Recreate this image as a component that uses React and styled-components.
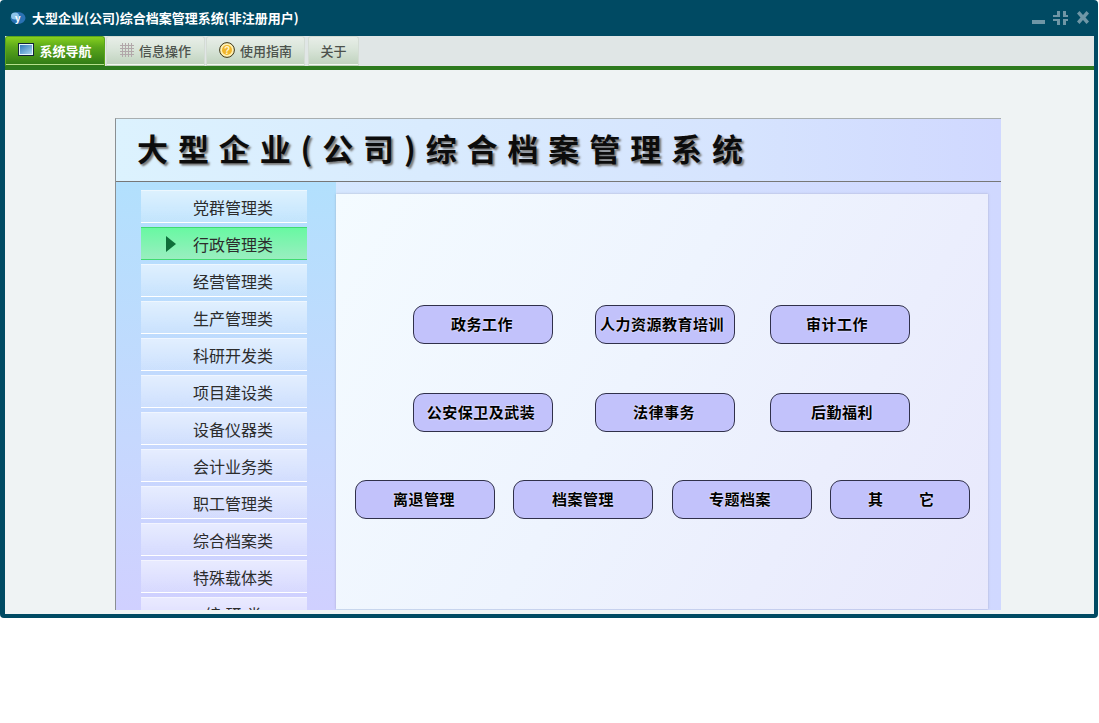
import styled, { createGlobalStyle } from "styled-components";

const GlobalStyle = createGlobalStyle`
  html, body {
    margin: 0;
    padding: 0;
    background: #fff;
    font-family: "Noto Sans CJK SC", "Liberation Sans", sans-serif;
  }
`;

const NAV_ITEMS = [
  "党群管理类",
  "行政管理类",
  "经营管理类",
  "生产管理类",
  "科研开发类",
  "项目建设类",
  "设备仪器类",
  "会计业务类",
  "职工管理类",
  "综合档案类",
  "特殊载体类",
  "编 研 类",
];

// label, gap before the button, nudge of the label to the left
const BUTTON_ROWS = [
  { top: 111, left: 77, items: [["政务工作", 0, 2], ["人力资源教育培训", 42, 6], ["审计工作", 35, 6]] },
  { top: 49, left: 77, items: [["公安保卫及武装", 0, 4], ["法律事务", 42, 2], ["后勤福利", 35, -4]] },
  { top: 48, left: 19, items: [["离退管理", 0, 2], ["档案管理", 18, 0], ["专题档案", 19, 4], ["其　　它", 18, -4, true]] },
];

const AppIcon = () => (
  <svg width="16" height="14" viewBox="0 0 16 14">
    <ellipse cx="8" cy="7" rx="7.5" ry="6" fill="#2a72b4" />
    <ellipse cx="5" cy="5" rx="4" ry="3.5" fill="#8cc4ea" />
    <text x="5" y="11" fontSize="10" fontWeight="700" fill="#fff" fontFamily="Liberation Sans">y</text>
  </svg>
);

const WindowControls = () => (
  <svg width="57" height="14" viewBox="0 0 57 14">
    <g fill="#6f96a6">
      <rect x="0" y="9" width="13" height="4" />
      <path d="M25 0h3v6h-7V4h4zM31 0h3v4h2v2h-5zM21 8h7v6h-3v-4h-4zM31 8h5v2h-2v4h-3z" />
      <path d="M45 2.500l2.500-2.500 3.500 4 3.500-4 2.500 2.500-3.500 4 3.500 4-2.500 2.500-3.500-4-3.500 4-2.500-2.500 3.500-4z" />
    </g>
  </svg>
);

const MonitorIcon = () => (
  <svg width="16" height="14" viewBox="0 0 16 14">
    <defs>
      <linearGradient id="screenFill" x1="0" y1="0" x2="1" y2="1">
        <stop offset="0" stopColor="#2f78b8" />
        <stop offset="1" stopColor="#a8d6f0" />
      </linearGradient>
    </defs>
    <rect x="0.500" y="0.500" width="15" height="12" fill="#e8f4fb" stroke="#10243a" />
    <rect x="2" y="2" width="12" height="9" fill="url(#screenFill)" />
  </svg>
);

const GridIcon = () => (
  <svg width="14" height="14" viewBox="0 0 14 14" stroke="#b2a8aa" strokeWidth="1">
    <path d="M2.500 0v14M5.500 0v14M8.500 0v14M11.500 0v14M0 2.500h14M0 5.500h14M0 8.500h14M0 11.500h14" />
  </svg>
);

const GuideIcon = () => (
  <svg width="16" height="16" viewBox="0 0 16 16">
    <circle cx="8" cy="8" r="7.400" fill="#fff0b0" stroke="#3c3418" />
    <circle cx="8" cy="8" r="5" fill="#f0b52c" />
    <text x="8" y="11.500" fontSize="10" fontWeight="700" textAnchor="middle" fill="#fff6d0" fontFamily="Liberation Sans">?</text>
  </svg>
);

const ArrowIcon = () => (
  <svg width="10" height="16" viewBox="0 0 10 16">
    <path d="M0 0l10 8-10 8z" fill="#0f6e3a" />
  </svg>
);

const App = () => (
  <>
    <GlobalStyle />
    <Window>
      <TitleBar>
        <AppIcon />
        <TitleText>大型企业(公司)综合档案管理系统(非注册用户)</TitleText>
        <ControlSlot>
          <WindowControls />
        </ControlSlot>
      </TitleBar>
      <Inner>
        <TabBar>
          <Tab $active $width={100}>
            <MonitorIcon />
            <span>系统导航</span>
          </Tab>
          <Tab $width={99}>
            <GridIcon />
            <span>信息操作</span>
          </Tab>
          <Tab $width={99}>
            <GuideIcon />
            <span>使用指南</span>
          </Tab>
          <Tab $width={51} $gap={2}>
            <span>关于</span>
          </Tab>
        </TabBar>
        <Content>
          <Panel>
            <PanelHeader>
              <PanelTitle>大型企业(公司)综合档案管理系统</PanelTitle>
            </PanelHeader>
            <PanelBody>
              <SideColumn>
                {NAV_ITEMS.map((name, index) => (
                  <NavItem key={name} $active={index === 1}>
                    {index === 1 && (
                      <NavArrow>
                        <ArrowIcon />
                      </NavArrow>
                    )}
                    <NavLabel $spaced={name.includes(" ")}>{name}</NavLabel>
                  </NavItem>
                ))}
              </SideColumn>
              <MainColumn>
                <MainCard>
                  {BUTTON_ROWS.map((row) => (
                    <ButtonRow key={row.items[0][0]} $top={row.top} $left={row.left}>
                      {row.items.map(([label, gap, nudge, wide]) => (
                        <ActionButton key={label} $gap={gap} $nudge={nudge} $wide={wide}>
                          {label}
                        </ActionButton>
                      ))}
                    </ButtonRow>
                  ))}
                </MainCard>
              </MainColumn>
            </PanelBody>
          </Panel>
        </Content>
      </Inner>
    </Window>
  </>
);

export default App;

const Window = styled.div`
  width: 1098px;
  height: 618px;
  box-sizing: border-box;
  padding: 0 4px 4px 5px;
  background: #004a63;
  border-radius: 4px;
  display: flex;
  flex-direction: column;
`;

const TitleBar = styled.div`
  height: 36px;
  flex: none;
  display: flex;
  align-items: center;
  gap: 6px;
  padding: 0 5px 0 5px;
`;

const TitleText = styled.div`
  color: #fff;
  font-size: 13px;
  font-weight: 700;
  line-height: 36px;
`;

const ControlSlot = styled.div`
  margin-left: auto;
  display: flex;
  align-items: center;
`;

const Inner = styled.div`
  flex: 1;
  min-height: 0;
  background: #eff3f4;
  display: flex;
  flex-direction: column;
`;

const TabBar = styled.div`
  height: 30px;
  flex: none;
  background: #e0e6e6;
  border-bottom: 4px solid #2d7a1e;
  display: flex;
  gap: 1px;
`;

const Tab = styled.div`
  width: ${(props) => props.$width}px;
  margin-left: ${(props) => props.$gap || 0}px;
  box-sizing: border-box;
  padding-bottom: 2px;
  border-radius: 3px 3px 0 0;
  border: 1px solid ${(props) => (props.$active ? "#5aa51c" : "#d4dcd4")};
  border-bottom: 1px solid ${(props) => (props.$active ? "#2f7a16" : "#bfd2bd")};
  box-shadow: inset 0 -2px 0 -1px ${(props) => (props.$active ? "#b6e08e" : "#f2f6f0")};
  background: ${(props) =>
    props.$active
      ? "linear-gradient(#86d01e 0%, #5ca81a 35%, #2f7a16 100%)"
      : "linear-gradient(#e8eee8 0%, #d8e4d8 45%, #bfd2bd 100%)"};
  color: ${(props) => (props.$active ? "#fff" : "#4c524c")};
  font-size: 13px;
  font-weight: ${(props) => (props.$active ? 700 : 500)};
  display: flex;
  align-items: center;
  justify-content: center;
  gap: 5px;
`;

const Content = styled.div`
  flex: 1;
  min-height: 0;
  padding: 48px 0 4px 110px;
  display: flex;
`;

const Panel = styled.div`
  width: 886px;
  height: 492px;
  box-sizing: border-box;
  border-top: 1px solid #a8aeb0;
  border-left: 1px solid #8a8f92;
  overflow: hidden;
  display: flex;
  flex-direction: column;
`;

const PanelHeader = styled.div`
  height: 63px;
  flex: none;
  box-sizing: border-box;
  padding: 0 0 6px 21px;
  background: linear-gradient(90deg, #dcf2fe 0%, #d6e4fe 70%, #d0d8ff 100%);
  border-bottom: 1px solid #777;
  display: flex;
  align-items: center;
`;

const PanelTitle = styled.div`
  font-size: 31px;
  font-weight: 700;
  letter-spacing: 9.9px;
  color: #0c0c0c;
  text-shadow: 2px 2px 2px #777;
  white-space: nowrap;
`;

const PanelBody = styled.div`
  flex: 1;
  min-height: 0;
  display: flex;
  background: linear-gradient(90deg, #d8ecfe 0%, #d0d8ff 100%);
`;

const SideColumn = styled.div`
  width: 220px;
  flex: none;
  box-sizing: border-box;
  padding: 8px 29px 0 25px;
  background: linear-gradient(#b2e0fd 0%, #c6d8fe 60%, #d0d0ff 100%);
  display: flex;
  flex-direction: column;
  gap: 4px;
`;

const NavItem = styled.div`
  height: 33px;
  flex: none;
  position: relative;
  box-sizing: border-box;
  display: flex;
  align-items: center;
  padding-left: 52px;
  color: #2c2c2c;
  font-size: 16px;
  background: ${(props) =>
    props.$active
      ? "linear-gradient(#68f8a2 0%, #9aeec0 100%)"
      : "linear-gradient(rgba(255,255,255,0.55) 0%, rgba(255,255,255,0.18) 100%)"};
  border-top: 1px solid ${(props) => (props.$active ? "#3fdc70" : "rgba(255,255,255,0.7)")};
  border-bottom: 1px solid ${(props) => (props.$active ? "#3fdc70" : "#ffffff")};
`;

const NavArrow = styled.span`
  position: absolute;
  left: 25px;
  top: 8px;
  display: flex;
`;

const NavLabel = styled.span`
  margin-left: ${(props) => (props.$spaced ? "12px" : "0")};
  word-spacing: ${(props) => (props.$spaced ? "1px" : "0")};
  white-space: pre;
`;

const MainColumn = styled.div`
  flex: 1;
  min-width: 0;
  padding-top: 12px;
`;

const MainCard = styled.div`
  width: 652px;
  height: 415px;
  background: linear-gradient(120deg, #f4fbff 0%, #eef4fe 45%, #e8e8fc 100%);
  box-shadow: 0 0 2px rgba(130, 130, 150, 0.5);
  overflow: hidden;
`;

const ButtonRow = styled.div`
  display: flex;
  margin-top: ${(props) => props.$top}px;
  padding-left: ${(props) => props.$left}px;
`;

const ActionButton = styled.div`
  width: 140px;
  height: 39px;
  flex: none;
  box-sizing: border-box;
  margin-left: ${(props) => props.$gap}px;
  padding: 0 ${(props) => Math.max(props.$nudge, 0)}px 2px ${(props) => Math.max(-props.$nudge, 0)}px;
  border: 1px solid #30304a;
  border-radius: 11px;
  background: #c2c2fb;
  color: #000;
  font-size: 15px;
  font-weight: 700;
  letter-spacing: ${(props) => (props.$wide ? "2px" : "0.5px")};
  text-shadow: 0 0 2px #fff;
  display: flex;
  align-items: center;
  justify-content: center;
  white-space: pre;
`;
